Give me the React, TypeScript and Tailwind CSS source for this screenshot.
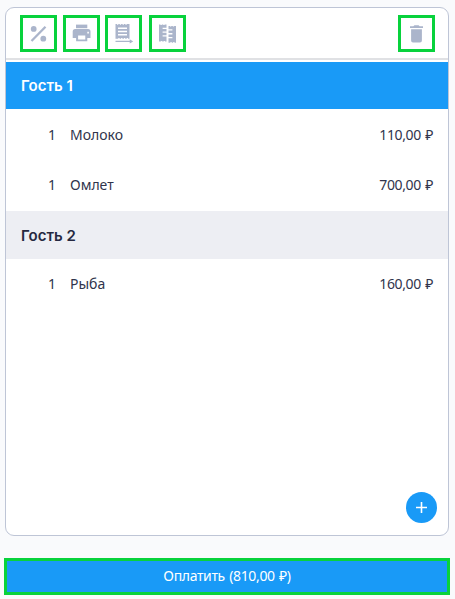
import type { ReactNode } from "react";

type Item = { qty: number; name: string; price: string };

const guestOneItems: Item[] = [
  { qty: 1, name: "Молоко", price: "110,00 ₽" },
  { qty: 1, name: "Омлет", price: "700,00 ₽" },
];

const guestTwoItems: Item[] = [{ qty: 1, name: "Рыба", price: "160,00 ₽" }];

function ToolButton({ label, className, children }: { label: string; className?: string; children: ReactNode }) {
  return (
    <button
      aria-label={label}
      className={`flex h-[37px] w-[37px] shrink-0 items-center justify-center border-[3px] border-[#08d23c] text-[#abb5cb] ${className ?? ""}`}
    >
      {children}
    </button>
  );
}

function PercentIcon() {
  return (
    <svg width="20" height="20" viewBox="0 0 20 20" fill="currentColor">
      <path d="M2.5 17 16.5 2.700" stroke="currentColor" strokeWidth="2.3" />
      <circle cx="4.7" cy="4.900" r="2.9" />
      <circle cx="14.3" cy="14.7" r="2.9" />
    </svg>
  );
}

function PrinterIcon() {
  return (
    <svg width="20" height="20" viewBox="0 0 20 20" fill="currentColor">
      <path d="M4 .6h11.300v3.600H4z" />
      <path
        fillRule="evenodd"
        d="M3.200 5h12.800a2.500 2.500 0 0 1 2.500 2.500v6.400h-3.200v3.400H4.100v-3.400H.7V7.500a2.500 2.500 0 0 1 2.500-2.500zm2.900 6.600v3.900h7.200v-3.900zm9.200-3.800v1.600h1.600V7.800z"
      />
    </svg>
  );
}

function TransferIcon() {
  return (
    <svg width="20" height="20" viewBox="0 0 20 20" fill="currentColor">
      <path
        fillRule="evenodd"
        d="M1.500 0H3v.8h1.300V0h1.500v.8h1.300V0h1.500v.8h1.300V0h1.500v.8h1.300V0h2.800v14.800H14V14h-1.300v.8h-1.500V14H9.900v.8H8.400V14H7.100v.8H5.600V14H4.300v.8H1.500zM4 3.500v1.500h9V3.500zM4 6.700v1.500h9V6.700zM4 9.900v1.500h9V9.900z"
      />
      <path d="M1.500 16.700h14.200v-1.500l3.500 2.200-3.500 2.200v-1.500H1.500z" />
    </svg>
  );
}

function SplitIcon() {
  return (
    <svg width="20" height="20" viewBox="0 0 20 20" fill="currentColor">
      <path d="M1 .5h1.500v.6h1.300V.5h1.500v.6h1.300V.5h1.900v3.200H4.600v1.300h3.900v2.500H4.600v1.300h3.900v2.500H4.600v1.300h3.900v4.900H7v-.6H5.700v.6H4.200v-.6H2.900v.6H1z" />
      <path d="M10.500 2H12v.6h1.300V2h1.500v.6h1.300V2H18v16.700h-1.500v-.6h-1.300v.6h-1.500v-.6h-1.300v.6h-1.900v-4.500h3.900v-1.300h-3.900v-2.500h3.900V9.100h-3.900V6.600h3.900V5.300h-3.900z" />
    </svg>
  );
}

function TrashIcon() {
  return (
    <svg width="20" height="20" viewBox="0 0 20 20" fill="currentColor">
      <path d="M4.100 5.200h10.800v11.300a1.900 1.900 0 0 1-1.900 1.900H6a1.900 1.900 0 0 1-1.900-1.900zM3 2.300h3.400l1-1h4.200l1 1H16v1.800H3z" />
    </svg>
  );
}

function ItemRow({ item, className }: { item: Item; className: string }) {
  return (
    <div
      className={`flex shrink-0 items-center pr-[15px] pl-[42px] font-['Noto_Sans',sans-serif] text-[14px] text-[#30344c] ${className}`}
    >
      <span className="w-[22px]">{item.qty}</span>
      <span className="flex-1">{item.name}</span>
      <span className="tracking-[-0.35px] [word-spacing:1px]">{item.price}</span>
    </div>
  );
}

export default function App() {
  return (
    <div className="flex h-[599px] w-[455px] flex-col bg-[#f9fafc] pt-[7px] pr-[5px] pl-1">
      <div className="ml-px flex h-[529px] w-[444px] flex-col rounded-[9px] border border-[#bec5d6] bg-white">
        {/* Toolbar */}
        <div className="flex h-[52px] shrink-0 border-b-2 border-[#e0e1e4] pt-[7px] pr-[13px] pl-[14px]">
          <ToolButton label="Скидка">
            <PercentIcon />
          </ToolButton>
          <ToolButton label="Печать" className="ml-[6px]">
            <PrinterIcon />
          </ToolButton>
          <ToolButton label="Перенести" className="ml-[5px]">
            <TransferIcon />
          </ToolButton>
          <ToolButton label="Разделить" className="ml-[7px]">
            <SplitIcon />
          </ToolButton>
          <ToolButton label="Удалить" className="ml-auto">
            <TrashIcon />
          </ToolButton>
        </div>

        {/* Guests */}
        <div className="mt-[2px] flex h-[47px] shrink-0 items-center bg-[#199af7] pt-[2px] pl-[15px] font-[Inter,sans-serif] text-[15px] font-semibold text-white">
          Гость 1
        </div>
        {guestOneItems.map((item) => (
          <ItemRow key={item.name} item={item} className="h-[51px] [&+&]:pb-[2px]" />
        ))}
        <div className="flex h-[48px] shrink-0 items-center bg-[#edeef3] pt-[2px] pl-[15px] font-[Inter,sans-serif] text-[15px] font-semibold text-[#252840]">
          Гость 2
        </div>
        {guestTwoItems.map((item) => (
          <ItemRow key={item.name} item={item} className="h-[49px]" />
        ))}

        <button
          aria-label="Добавить"
          className="mt-auto mr-[11px] mb-[12px] flex h-[31px] w-[31px] items-center justify-center self-end rounded-full bg-[#199af7] text-white"
        >
          <svg width="13" height="13" viewBox="0 0 13 13" stroke="currentColor" strokeWidth="1.600">
            <path d="M6.500 1v11M1 6.500h11" />
          </svg>
        </button>
      </div>

      <button className="mt-[22px] flex h-[37px] w-[446px] items-center justify-center border-[3px] border-[#08d23c] bg-[#199af7] pb-[2px] font-['Noto_Sans',sans-serif] text-[14px] tracking-[-0.35px] text-white [word-spacing:1px]">
        Оплатить (810,00 ₽)
      </button>
    </div>
  );
}
